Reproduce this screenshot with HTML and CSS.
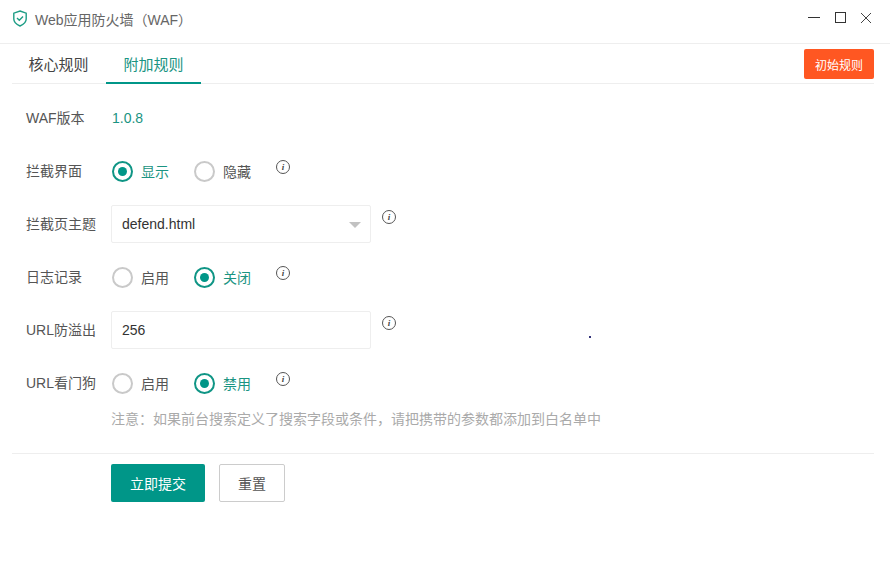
FILE: index.html
```html
<!DOCTYPE html>
<html lang="zh-CN">
<head>
<meta charset="utf-8">
<title>Web应用防火墙（WAF）</title>
<link rel="stylesheet" href="styles.css">
</head>
<body>
<div class="window">
  <header class="titlebar">
    <div class="title">
      <svg class="shield" width="16" height="17" viewBox="0 0 16 17" fill="none" stroke="#1d9d85" stroke-width="1.4"><path d="M8 1 L14.2 3.2 V9 C14.2 12.4 11.2 14.6 8 16 C4.8 14.6 1.8 12.4 1.8 9 V3.2 Z"/><path d="M5 8 L7.3 10.2 L11 6.4"/></svg>
      <span>Web应用防火墙（WAF）</span>
    </div>
    <div class="controls">
      <svg width="12" height="12" viewBox="0 0 12 12" stroke="#333" fill="none"><path d="M0 5.5 H12"/></svg>
      <svg width="12" height="12" viewBox="0 0 12 12" stroke="#333" fill="none"><rect x="1.5" y="0.5" width="10" height="10"/></svg>
      <svg width="12" height="12" viewBox="0 0 12 12" stroke="#444" fill="none"><path d="M1 1 L11 11 M11 1 L1 11"/></svg>
    </div>
  </header>
  <nav class="tabs">
    <a class="tab">核心规则</a>
    <a class="tab active">附加规则</a>
    <button class="init">初始规则</button>
  </nav>
  <main class="form">
    <div class="row">
      <label class="label">WAF版本</label>
      <span class="version">1.0.8</span>
    </div>
    <div class="row">
      <label class="label">拦截界面</label>
      <span class="radio on"><i></i>显示</span>
      <span class="radio"><i></i>隐藏</span>
      <span class="info">i</span>
    </div>
    <div class="row">
      <label class="label">拦截页主题</label>
      <div class="field select">defend.html<b class="caret"></b></div>
      <span class="info">i</span>
    </div>
    <div class="row">
      <label class="label">日志记录</label>
      <span class="radio"><i></i>启用</span>
      <span class="radio on"><i></i>关闭</span>
      <span class="info">i</span>
    </div>
    <div class="row">
      <label class="label">URL防溢出</label>
      <div class="field">256</div>
      <span class="info">i</span>
    </div>
    <div class="row">
      <label class="label">URL看门狗</label>
      <span class="radio"><i></i>启用</span>
      <span class="radio on"><i></i>禁用</span>
      <span class="info">i</span>
    </div>
    <p class="note">注意：如果前台搜索定义了搜索字段或条件，请把携带的参数都添加到白名单中</p>
    <div class="actions">
      <button class="submit">立即提交</button>
      <button class="reset">重置</button>
    </div>
  </main>
  <span class="speck"></span>
</div>
</body>
</html>
```
FILE: styles.css
```css
* { box-sizing: border-box; }
html, body { margin: 0; padding: 0; background: #fff; }
body { font-family: "Liberation Sans", "Noto Sans CJK SC", sans-serif; font-size: 14px; color: #555; }
.window { position: relative; width: 890px; height: 584px; overflow: hidden; background: #fff; }

.titlebar { height: 44px; border-bottom: 1px solid #eee; display: flex; align-items: center; justify-content: space-between; padding: 0 18px 6px 12px; }
.title { display: flex; align-items: center; gap: 7px; font-size: 14px; color: #666; }
.shield { display: block; }
.controls { display: flex; gap: 14px; margin-top: -1px; }
.controls svg { display: block; }

.tabs { height: 40px; margin: 0 16px 0 12px; border-bottom: 1px solid #eee; display: flex; align-items: flex-start; }
.tab { width: 95px; height: 40px; line-height: 41px; font-size: 15px; text-align: center; color: #444; border-bottom: 2px solid transparent; margin-left: -1px; }
.tab.active { color: #1a9482; border-bottom-color: #009688; margin-left: 0; }
.init { margin: 5px 0 0 auto; width: 70px; height: 30px; border: 0; border-radius: 2px; background: #ff5722; color: #fff; font: inherit; font-size: 12px; padding: 0; }

.form { padding: 15px 0 0 26px; }
.row { height: 38px; margin-bottom: 15px; display: flex; align-items: center; }
.label { width: 85px; flex: none; color: #555; margin-top: -2px; }
.version { color: #1a9482; margin-left: 1px; margin-top: -1px; }

.radio { display: flex; align-items: center; width: 82px; color: #555; }
.radio i { width: 21px; height: 21px; flex: none; margin: 0 8px 0 1px; border: 2px solid #c9c9c9; border-radius: 50%; display: block; position: relative; }
.radio.on { color: #1a9482; }
.radio.on i { border-color: #0f9585; }
.radio.on i::after { content: ""; position: absolute; left: 4px; top: 4px; width: 9px; height: 9px; border-radius: 50%; background: #009688; }

.info { width: 14px; height: 14px; flex: none; align-self: flex-start; margin: 8px 0 0 1px; border: 1px solid #555; border-radius: 50%; font: italic bold 9px/12px "Liberation Serif", serif; text-align: center; color: #444; }

.field { width: 260px; height: 38px; border: 1px solid #eee; border-radius: 2px; padding: 0 10px; line-height: 36px; color: #333; position: relative; }
.field + .info { margin-left: 11px; margin-top: 5px; }
.caret { position: absolute; right: 9px; top: 16px; width: 0; height: 0; border: 6px solid transparent; border-top: 6px solid #c2c2c2; border-bottom: 0; }

.note { margin: -8px 0 0 85px; height: 20px; line-height: 20px; font-size: 14px; color: #aaa; }
.actions { margin: 24px 16px 0 -14px; padding: 10px 0 0 99px; border-top: 1px solid #eee; display: flex; gap: 14px; }
.actions button { height: 38px; border-radius: 2px; font: inherit; font-size: 14px; padding: 0; }
.submit { width: 94px; background: #009688; border: 0; color: #fff; }
.reset { width: 66px; background: #fff; border: 1px solid #ccc; color: #555; }

.speck { position: absolute; left: 589px; top: 336px; width: 2px; height: 2px; background: #33337a; }
```
